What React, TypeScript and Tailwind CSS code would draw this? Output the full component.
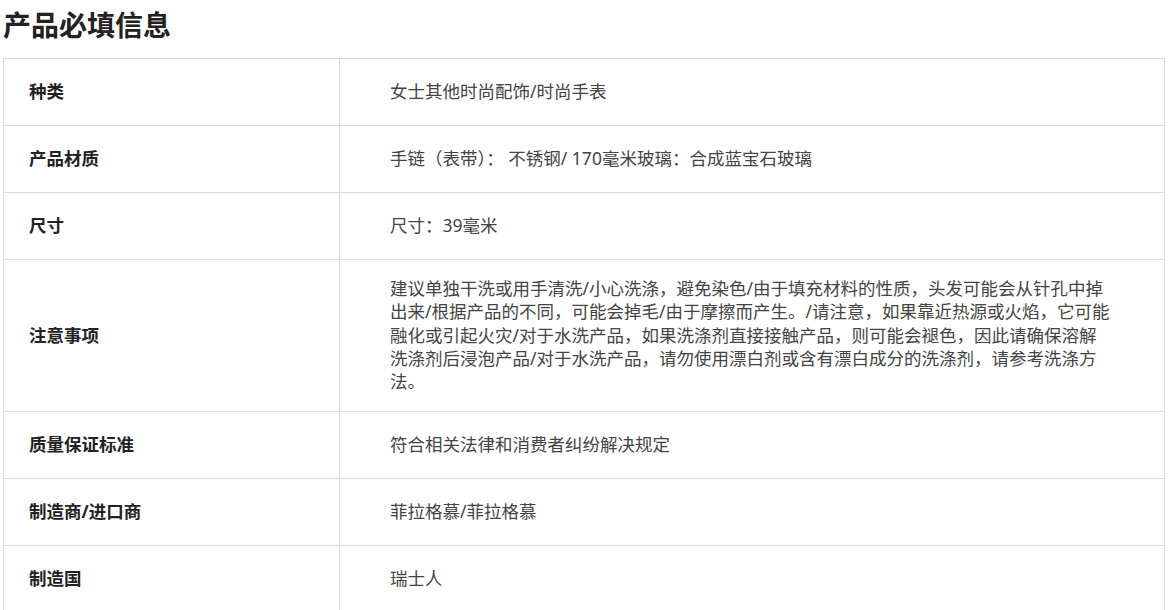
const rows: { label: string; value: string }[] = [
  { label: "种类", value: "女士其他时尚配饰/时尚手表" },
  { label: "产品材质", value: "手链（表带）： 不锈钢/ 170毫米玻璃：合成蓝宝石玻璃" },
  { label: "尺寸", value: "尺寸：39毫米" },
  {
    label: "注意事项",
    value:
      "建议单独干洗或用手清洗/小心洗涤，避免染色/由于填充材料的性质，头发可能会从针孔中掉出来/根据产品的不同，可能会掉毛/由于摩擦而产生。/请注意，如果靠近热源或火焰，它可能融化或引起火灾/对于水洗产品，如果洗涤剂直接接触产品，则可能会褪色，因此请确保溶解洗涤剂后浸泡产品/对于水洗产品，请勿使用漂白剂或含有漂白成分的洗涤剂，请参考洗涤方法。",
  },
  { label: "质量保证标准", value: "符合相关法律和消费者纠纷解决规定" },
  { label: "制造商/进口商", value: "菲拉格慕/菲拉格慕" },
  { label: "制造国", value: "瑞士人" },
];

export default function App() {
  return (
    <div className="min-h-screen bg-white pl-[3px] pt-[7px] font-['Noto_Sans','Noto_Sans_CJK_SC',sans-serif]">
      <h1 className="mb-[15px] text-[28px] font-bold leading-[36px] text-[#222]">产品必填信息</h1>

      <div className="w-[1162px] border border-b-0 border-[#d9d9d9]">
        {rows.map((row) => (
          <div key={row.label} className="flex min-h-[67px] border-b border-[#d9d9d9]">
            <div className="flex w-[336px] shrink-0 items-center border-r border-[#d9d9d9] pl-[25px] text-[17.5px] font-bold leading-[23.33px] text-[#222]">
              {row.label}
            </div>
            <div className="flex flex-1 items-center py-[17px] pl-[50px] pr-[52px] text-[17.5px] leading-[23.33px] text-[#444]">
              <p>{row.value}</p>
            </div>
          </div>
        ))}
      </div>
    </div>
  );
}
